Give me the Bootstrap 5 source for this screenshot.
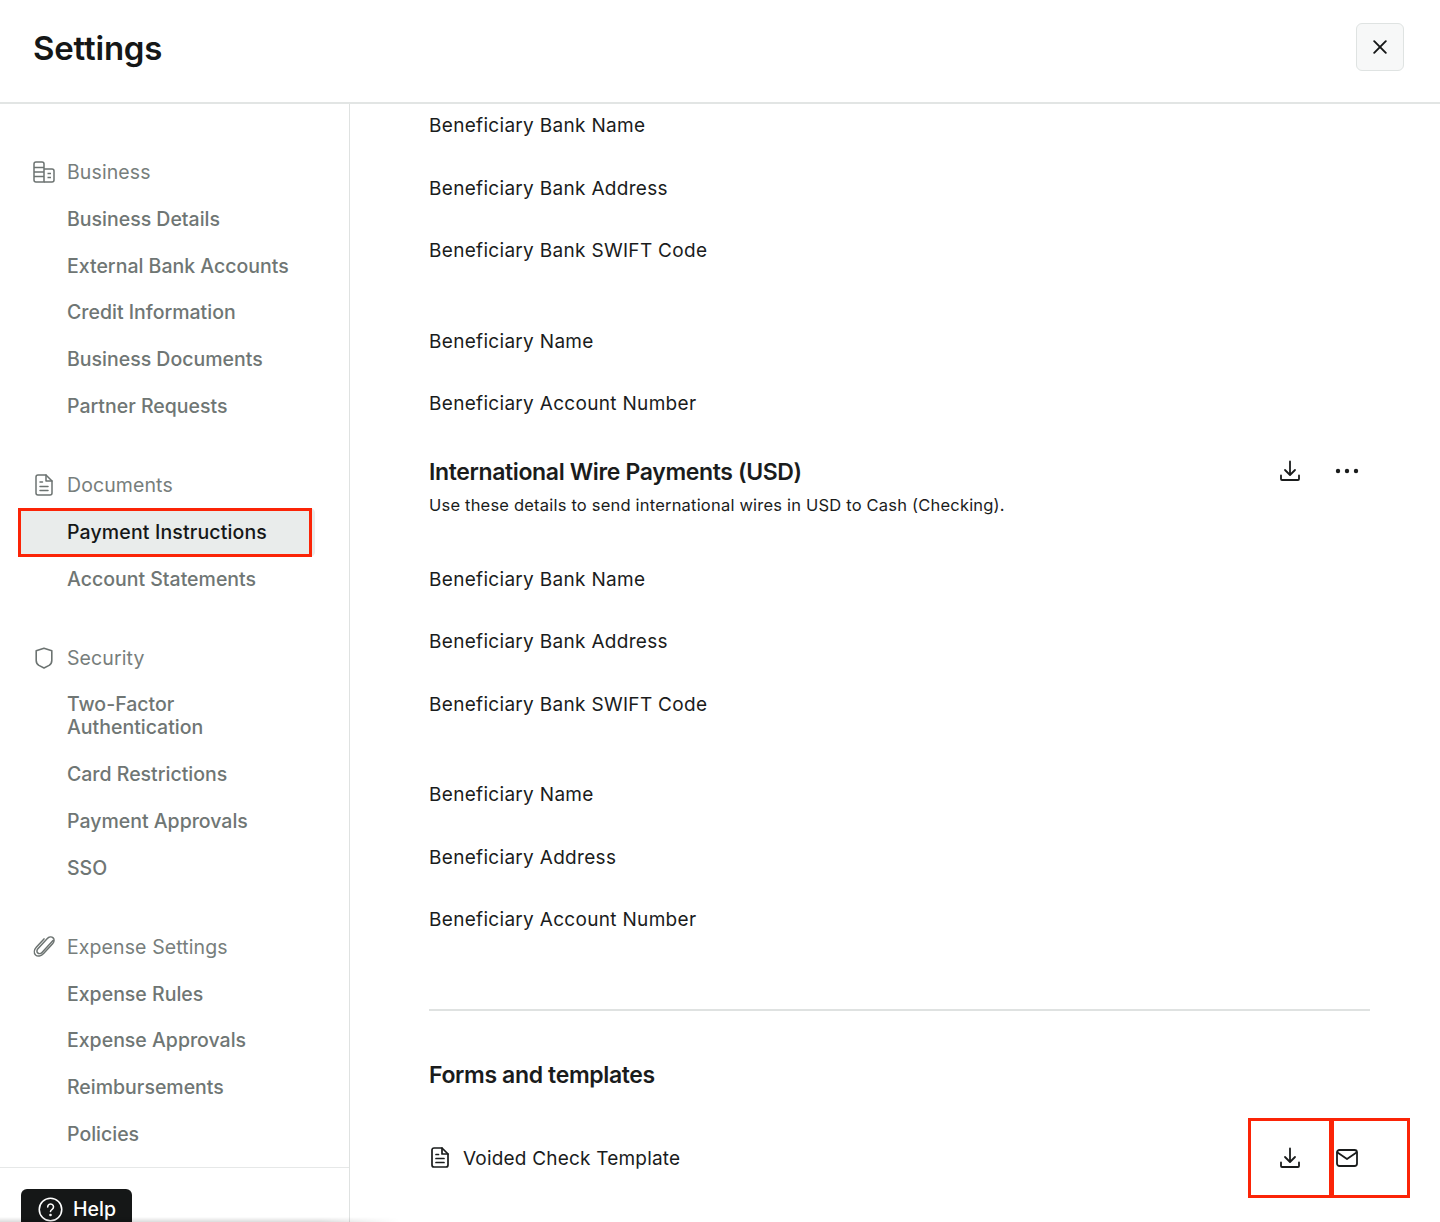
<!DOCTYPE html>
<html lang="en">
<head>
<meta charset="utf-8">
<title>Settings</title>
<link href="https://cdn.jsdelivr.net/npm/bootstrap@5.3.0/dist/css/bootstrap.min.css" rel="stylesheet">
<style>
html,body{height:100%;margin:0;overflow:hidden;background:#fff}
body{font-family:Inter,"Liberation Sans",sans-serif;color:#1a1c1c}
.shell{height:1222px;overflow:hidden;position:relative}
.topbar{height:104px;border-bottom:2px solid #e2e5e4;padding:0 36px 0 33px}
.page-title{font-size:33px;font-weight:600;letter-spacing:-.2px;line-height:40px;margin:-7px 0 0;color:#151717}
.close-box{width:48px;height:48px;padding:0;margin-top:-8px;background:#f7f8f8;border:1px solid #dfe3e2;border-radius:6px;color:#151717}
.close-box:hover{background:#f7f8f8;border-color:#dfe3e2}
.body-wrap{height:1118px}
.side{width:350px;flex:none;border-right:1px solid #dfe2e1;height:100%;position:relative}
.side-scroll{padding-top:56px;height:1064px;border-bottom:1px solid #e6e8e8}
.group{margin-bottom:55px}
.group-head{height:24px;margin-bottom:23.8px;padding-left:33px;font-size:19.5px;color:#777e7c;line-height:24px;letter-spacing:.1px}
.group-ico{width:22px;height:22px;margin-right:12px;color:#6c7371;flex:none}
.side-link{display:block;padding:0 40px 0 67px;font-size:19.5px;font-weight:500;line-height:23px;color:#6f7674;text-decoration:none;margin-bottom:23.8px}
.side-active{position:relative;color:#151717;margin:-13px 34px 10.8px 18px;padding:13px 0 13px 49px;background:#e9eceb;border-radius:5px;letter-spacing:.15px}
.mark-box{position:absolute;left:0;top:0;right:3px;bottom:0;border:3px solid #fb2407;pointer-events:none}
.help-btn{position:absolute;left:21px;top:1085px;width:111px;height:48px;background:#151717;border-radius:6px 6px 0 0;color:#fff;font-size:19.5px;font-weight:500;padding:8px 0 0 17px;line-height:24px;gap:10px}
.help-ico{flex:none}
.pane{flex:1;padding:10px 70px 0 79px;min-width:0}
.field{font-size:19px;line-height:24px;margin-bottom:38.5px;letter-spacing:.31px;color:#1a1c1c}
.field-gap{padding-top:28px}
.pane-heading{font-size:23px;font-weight:600;line-height:30px;letter-spacing:-.36px;color:#1a1c1c;margin:0}
.pane-sub{font-size:16.5px;line-height:22px;margin:7px 0 0;letter-spacing:.2px}
.head-row{padding-top:2.5px;height:113px}
.acts{margin:3px -5px 0 0}
.act{width:57px;height:22px;display:flex;justify-content:center;align-items:center;flex:none}
.rule-line{border:0;border-top:2px solid #dfe2e1;opacity:1;margin:76.5px 0 49px}
.tmpl-row{margin-top:28px;height:80px}
.tmpl-text{font-size:19px;letter-spacing:.31px}
.tmpl-label{margin-top:4px;letter-spacing:.2px}
.tmpl-ico{margin:0 14px 0 2px}
.box-a,.box-b{height:80px;border:3px solid #fb2407;display:flex;align-items:center;flex:none}
.box-a{width:84px;justify-content:center}
.box-b{width:79px;margin-left:-1px;padding-left:2px;margin-right:-40px}
.bottom-fade{position:absolute;left:0;bottom:0;width:400px;height:5px;background:linear-gradient(to bottom,rgba(0,0,0,0),rgba(0,0,0,.14));-webkit-mask-image:linear-gradient(to right,#000 80%,transparent);mask-image:linear-gradient(to right,#000 80%,transparent);pointer-events:none}
</style>
</head>
<body>
<div class="shell">
  <header class="topbar d-flex align-items-center justify-content-between">
    <h1 class="page-title">Settings</h1>
    <button class="btn close-box d-flex align-items-center justify-content-center" aria-label="Close">
      <svg width="14" height="14" viewBox="0 0 14 14" fill="none" stroke="currentColor" stroke-width="1.9" stroke-linecap="round"><path d="M1.2 1.2l11.6 11.6M12.8 1.2L1.2 12.8"/></svg>
    </button>
  </header>
  <div class="body-wrap d-flex">
    <aside class="side">
      <div class="side-scroll">
        <div class="group">
          <div class="group-head d-flex align-items-center">
            <svg class="group-ico" viewBox="0 0 22 22" fill="none" stroke="currentColor" stroke-width="1.5" stroke-linejoin="round"><path d="M1 3a2 2 0 0 1 2-2h6a2 2 0 0 1 2 2v18H3a2 2 0 0 1-2-2z"/><path d="M1 6.5h10M1 11h10M1 15.5h10"/><path d="M11 8h8a2 2 0 0 1 2 2v9a2 2 0 0 1-2 2h-8"/><path d="M14.5 12.5h3.5M14.5 16.5h3.5"/></svg>
            <span>Business</span>
          </div>
          <a class="side-link" href="#">Business Details</a>
          <a class="side-link" href="#">External Bank Accounts</a>
          <a class="side-link" href="#">Credit Information</a>
          <a class="side-link" href="#">Business Documents</a>
          <a class="side-link" href="#">Partner Requests</a>
        </div>
        <div class="group">
          <div class="group-head d-flex align-items-center">
            <svg class="group-ico" viewBox="0 0 22 22" fill="none" stroke="currentColor" stroke-width="1.5" stroke-linejoin="round" stroke-linecap="round"><path d="M5 1h8l6 6v12a2 2 0 0 1-2 2H5a2 2 0 0 1-2-2V3a2 2 0 0 1 2-2z"/><path d="M13 1v6h6"/><path d="M7 8h2.500M7 12.500h8M7 16.500h8"/></svg>
            <span>Documents</span>
          </div>
          <a class="side-link side-active" href="#">Payment Instructions<span class="mark-box"></span></a>
          <a class="side-link" href="#">Account Statements</a>
        </div>
        <div class="group">
          <div class="group-head d-flex align-items-center">
            <svg class="group-ico" viewBox="0 0 22 22" fill="none" stroke="currentColor" stroke-width="1.6" stroke-linejoin="round"><path d="M11 1.200l7.800 2.600v9.700c0 2.400-.9 3.700-2.700 4.900L11 21l-5.100-2.600c-1.800-1.200-2.700-2.500-2.700-4.900V3.800z"/></svg>
            <span>Security</span>
          </div>
          <a class="side-link" href="#">Two-Factor Authentication</a>
          <a class="side-link" href="#">Card Restrictions</a>
          <a class="side-link" href="#">Payment Approvals</a>
          <a class="side-link" href="#">SSO</a>
        </div>
        <div class="group">
          <div class="group-head d-flex align-items-center">
            <svg class="group-ico" viewBox="0 0 22 22" fill="none" stroke="currentColor" stroke-width="1.5" stroke-linecap="round" stroke-linejoin="round"><path d="M20 4.500 9 16.500c-1.200 1.300-3.200 1.400-4.300.4-1.100-1-1-2.900.2-4.200l9.200-10c1.800-1.900 4.500-2.200 6-.8 1.500 1.400 1.200 4-.5 5.900l-9 9.800c-2.400 2.600-6 3.200-8 1.400-2-1.900-1.500-5.300.9-7.900l7.500-8.200"/></svg>
            <span>Expense Settings</span>
          </div>
          <a class="side-link" href="#">Expense Rules</a>
          <a class="side-link" href="#">Expense Approvals</a>
          <a class="side-link" href="#">Reimbursements</a>
          <a class="side-link" href="#">Policies</a>
        </div>
      </div>
      <div class="help-btn d-flex align-items-start">
        <svg class="help-ico" width="25" height="25" viewBox="0 0 24 24" fill="none" stroke="currentColor" stroke-width="1.500" stroke-linecap="round"><circle cx="12" cy="12" r="10.800"/><path d="M9.300 9.500a2.800 2.800 0 1 1 4.300 2.400c-.9.600-1.600 1.100-1.600 2.100"/><circle cx="12" cy="17.300" r=".5" fill="currentColor"/></svg>
        <span>Help</span>
      </div>
    </aside>
    <main class="pane">
      <div class="field">Beneficiary Bank Name</div>
      <div class="field">Beneficiary Bank Address</div>
      <div class="field">Beneficiary Bank SWIFT Code</div>
      <div class="field field-gap">Beneficiary Name</div>
      <div class="field">Beneficiary Account Number</div>
      <div class="head-row d-flex justify-content-between">
        <div>
          <h2 class="pane-heading">International Wire Payments (USD)</h2>
          <p class="pane-sub">Use these details to send international wires in USD to Cash (Checking).</p>
        </div>
        <div class="d-flex acts">
          <div class="act"><svg width="22" height="22" viewBox="0 0 22 22" fill="none" stroke="#1a1c1c" stroke-width="1.800" stroke-linecap="round" stroke-linejoin="round"><path d="M11 1.500v13M6 10l5 5 5-5"/><path d="M2 15.500V19a1 1 0 0 0 1 1h16a1 1 0 0 0 1-1v-3.500"/></svg></div>
          <div class="act"><svg width="24" height="6" viewBox="0 0 24 6" fill="#1a1c1c"><circle cx="3" cy="3" r="2.200"/><circle cx="12" cy="3" r="2.200"/><circle cx="21" cy="3" r="2.200"/></svg></div>
        </div>
      </div>
      <div class="field">Beneficiary Bank Name</div>
      <div class="field">Beneficiary Bank Address</div>
      <div class="field">Beneficiary Bank SWIFT Code</div>
      <div class="field field-gap">Beneficiary Name</div>
      <div class="field">Beneficiary Address</div>
      <div class="field">Beneficiary Account Number</div>
      <hr class="rule-line">
      <h2 class="pane-heading">Forms and templates</h2>
      <div class="tmpl-row d-flex align-items-center justify-content-between">
        <div class="d-flex align-items-center tmpl-text">
          <svg class="tmpl-ico" width="18" height="21" viewBox="0 0 18 21" fill="none" stroke="#1a1c1c" stroke-width="1.700" stroke-linecap="round" stroke-linejoin="round"><path d="M3 1h8l6 6v11a2 2 0 0 1-2 2H3a2 2 0 0 1-2-2V3a2 2 0 0 1 2-2z"/><path d="M11 1v6h6"/><path d="M5 7.500h2.500M5 11.500h8M5 15.500h8"/></svg>
          <span class="tmpl-label">Voided Check Template</span>
        </div>
        <div class="d-flex">
          <div class="box-a"><svg width="22" height="22" viewBox="0 0 22 22" fill="none" stroke="#1a1c1c" stroke-width="1.800" stroke-linecap="round" stroke-linejoin="round"><path d="M11 1.500v13M6 10l5 5 5-5"/><path d="M2 15.500V19a1 1 0 0 0 1 1h16a1 1 0 0 0 1-1v-3.500"/></svg></div>
          <div class="box-b"><svg width="22" height="18" viewBox="0 0 22 18" fill="none" stroke="#1a1c1c" stroke-width="1.800" stroke-linecap="round" stroke-linejoin="round"><rect x="1" y="1" width="20" height="16" rx="2.500"/><path d="M1.500 3.500 11 10l9.500-6.500"/></svg></div>
        </div>
      </div>
    </main>
  </div>
  <div class="bottom-fade"></div>
</div>
<script src="https://cdn.jsdelivr.net/npm/bootstrap@5.3.0/dist/js/bootstrap.bundle.min.js"></script>
</body>
</html>
